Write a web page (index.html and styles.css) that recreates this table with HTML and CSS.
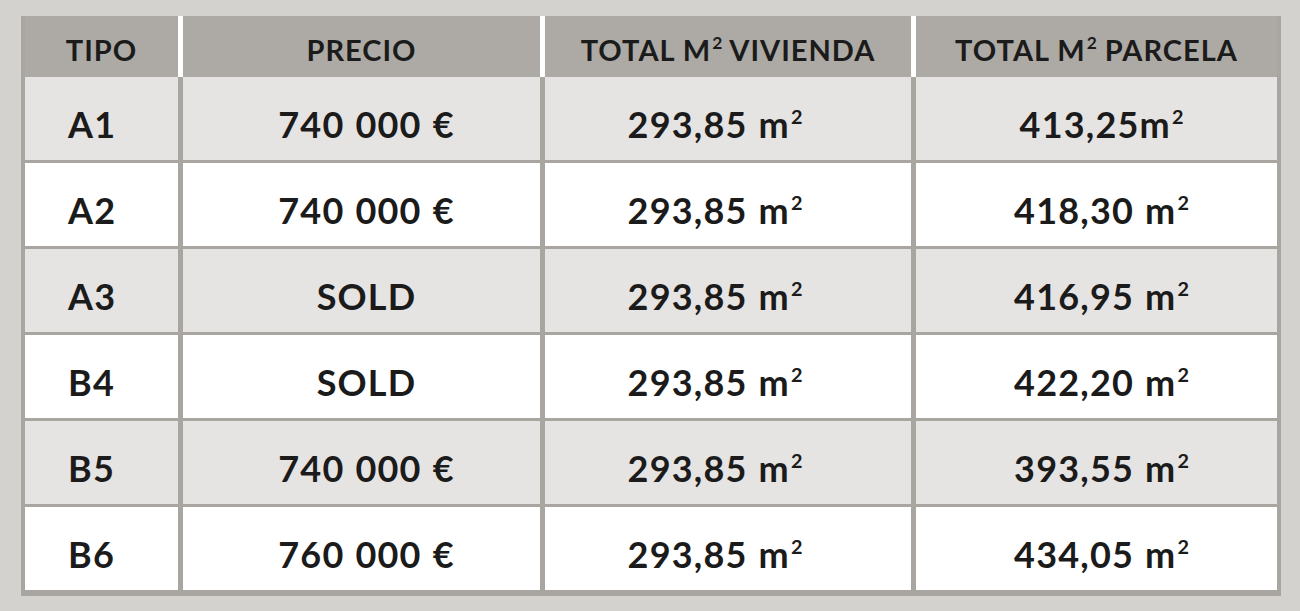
FILE: index.html
```html
<!DOCTYPE html>
<html lang="es">
<head>
<meta charset="utf-8">
<title>Precios</title>
<link rel="stylesheet" href="styles.css">
</head>
<body>
<div class="page">
  <div class="table">
    <div class="thead">
      <div class="th"><span>TIPO</span></div>
      <div class="th"><span>PRECIO</span></div>
      <div class="th"><span>TOTAL M<sup>2</sup> VIVIENDA</span></div>
      <div class="th"><span>TOTAL M<sup>2</sup> PARCELA</span></div>
    </div>
    <div class="tbody">
      <div class="td shade"><span>A1</span></div>
      <div class="td shade"><span>740 000 €</span></div>
      <div class="td shade"><span>293,85 m<sup>2</sup></span></div>
      <div class="td shade"><span>413,25m<sup>2</sup></span></div>

      <div class="td"><span>A2</span></div>
      <div class="td"><span>740 000 €</span></div>
      <div class="td"><span>293,85 m<sup>2</sup></span></div>
      <div class="td"><span>418,30 m<sup>2</sup></span></div>

      <div class="td shade"><span>A3</span></div>
      <div class="td shade"><span>SOLD</span></div>
      <div class="td shade"><span>293,85 m<sup>2</sup></span></div>
      <div class="td shade"><span>416,95 m<sup>2</sup></span></div>

      <div class="td"><span>B4</span></div>
      <div class="td"><span>SOLD</span></div>
      <div class="td"><span>293,85 m<sup>2</sup></span></div>
      <div class="td"><span>422,20 m<sup>2</sup></span></div>

      <div class="td shade"><span>B5</span></div>
      <div class="td shade"><span>740 000 €</span></div>
      <div class="td shade"><span>293,85 m<sup>2</sup></span></div>
      <div class="td shade"><span>393,55 m<sup>2</sup></span></div>

      <div class="td"><span>B6</span></div>
      <div class="td"><span>760 000 €</span></div>
      <div class="td"><span>293,85 m<sup>2</sup></span></div>
      <div class="td"><span>434,05 m<sup>2</sup></span></div>
    </div>
  </div>
</div>
</body>
</html>
```
FILE: styles.css
```css
html, body {
  margin: 0;
  padding: 0;
  background: #d4d2cf;
}
body {
  width: 1300px;
  height: 611px;
  overflow: hidden;
  font-family: "Lato", "Liberation Sans", sans-serif;
  color: #1b1b1b;
}
.page {
  padding: 16px 19px 0 21px;
}
.table {
  width: 1260px;
  box-sizing: border-box;
  background: #a9a6a1;
  padding: 0 4px 6px 4px;
  display: flex;
  flex-direction: column;
}
.thead,
.tbody {
  display: grid;
  grid-template-columns: 153px 357px 366px 361px;
  column-gap: 5px;
}
.thead {
  background: #ffffff;
}
.tbody {
  row-gap: 3px;
}
.th {
  background: #adaaa5;
  height: 61px;
  display: flex;
  align-items: center;
  justify-content: center;
  padding-top: 5px;
  box-sizing: border-box;
  font-size: 29px;
  font-weight: 700;
  letter-spacing: 1px;
  white-space: nowrap;
}
.td {
  background: #ffffff;
  height: 83px;
  display: flex;
  align-items: center;
  justify-content: center;
  padding-top: 10px;
  box-sizing: border-box;
  font-size: 36px;
  font-weight: 700;
  letter-spacing: 1.2px;
  word-spacing: 1px;
  white-space: nowrap;
}
.td.shade {
  background: #e6e4e2;
}
.td:nth-child(4n+1) {
  justify-content: flex-start;
  padding-left: 43px;
}
.td:nth-child(4n+2) {
  padding-left: 10px;
}
.td:nth-child(4n+3) {
  padding-right: 26px;
}
.td:nth-child(4n+4) {
  padding-left: 10px;
}
sup {
  font-size: 0.55em;
  line-height: 0;
  vertical-align: 0.7em;
  margin-left: 1px;
  letter-spacing: 0;
}
.th sup {
  font-size: 0.6em;
  vertical-align: 0.65em;
  margin-left: 1px;
}
```
